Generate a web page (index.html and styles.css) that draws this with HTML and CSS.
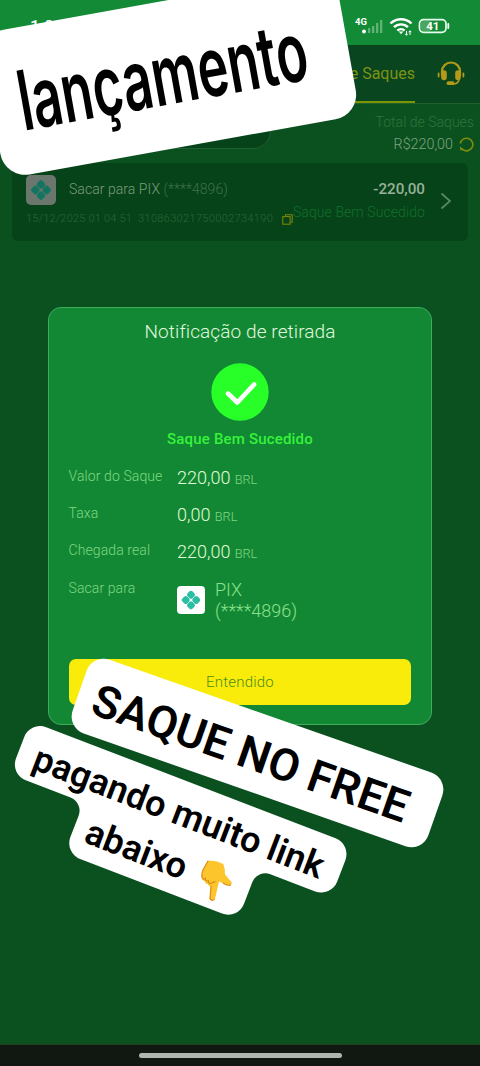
FILE: index.html
```html
<!DOCTYPE html>
<html lang="pt-BR">
<head>
<meta charset="utf-8">
<meta name="viewport" content="width=device-width, initial-scale=1">
<title>Notificação de retirada</title>
<link rel="stylesheet" href="styles.css">
</head>
<body>
<svg width="0" height="0" class="defs" aria-hidden="true">
  <symbol id="pix" viewBox="0 0 28 28">
    <g transform="translate(14 14) rotate(45)">
      <rect x="-7.1" y="-7.1" width="6.8" height="6.8" rx="2"/>
      <rect x="0.3" y="-7.1" width="6.8" height="6.8" rx="2"/>
      <rect x="-7.1" y="0.3" width="6.8" height="6.8" rx="2"/>
      <rect x="0.3" y="0.3" width="6.8" height="6.8" rx="2"/>
    </g>
  </symbol>
</svg>
<div class="phone">
  <header class="status-bar">
    <span class="clock">1:06</span>
    <svg class="status-icons" width="100" height="24" viewBox="0 0 100 24">
      <text x="0" y="11" class="net">4G</text>
      <circle cx="9" cy="17.5" r="2" fill="#fff"/>
      <g fill="#5fb475"><rect x="13" y="14" width="2.3" height="5"/><rect x="17" y="12" width="2.3" height="7"/><rect x="21" y="9" width="2.3" height="10"/><rect x="25" y="6" width="2.3" height="13"/></g>
      <g fill="none" stroke="#fff" stroke-width="2.4"><path d="M35.5 9.5a15 15 0 0 1 21 0M39 13.2a10 10 0 0 1 14 0M42.4 16.6a5.2 5.2 0 0 1 7.2 0"/></g>
      <path d="M43.7 17.500l2.300 2.800 2.300-2.800z" fill="#fff"/>
      <path d="M51.500 17v4m-1.200-1.200l1.200 1.500 1.200-1.500M55 21v-4m-1.200 1.200l1.200-1.500 1.200 1.500" stroke="#fff" fill="none"/>
      <rect x="64.5" y="5.7" width="26.5" height="12.6" rx="4" fill="none" stroke="#e8fff0" stroke-width="1.7"/>
      <rect x="66" y="7" width="10" height="10" rx="2" fill="#4aa65d"/>
      <path d="M93.3 10v4" stroke="#fff" stroke-width="1.8" stroke-linecap="round"/>
      <text x="71.2" y="16.2" class="battery">41</text>
    </svg>
  </header>
  <nav class="tabs">
    <span class="tab">Registro de Saques</span>
    <svg width="28" height="28" viewBox="0 0 28 28" fill="none" stroke="#b39a19" stroke-linecap="round">
      <path d="M5 15v-3.500a9 9 0 0 1 18 0v3.500" stroke-width="2.200"/>
      <path d="M7 13v4.500M21 13v4.500" stroke-width="5.600"/>
      <path d="M1.600 13.500v3M26.400 13.500v3" stroke-width="1.800"/>
      <path d="M22 20c-1 3-3 4-6 4" stroke-width="1.600"/>
      <path d="M11.500 23.200h4" stroke-width="3.800"/>
    </svg>
  </nav>
  <section class="summary">
    <div class="filter"><svg width="8" height="6" viewBox="0 0 8 6"><path d="M1 1l3 3 3-3" fill="none" stroke="#498454"/></svg></div>
    <div class="total">
      <span class="total-label">Total de Saques</span>
      <span class="total-value">R$220,00
        <svg width="15" height="15" viewBox="0 0 15 15" fill="none" stroke="#7f8c0b" stroke-width="1.6"><path d="M1.300 6.500A6.300 6.300 0 1 1 3.800 12.600"/><path d="M.8 9.500l.6 4 3.800-.9z" fill="#7f8c0b" stroke="none"/></svg>
      </span>
    </div>
  </section>
  <section class="record">
    <div class="record-main">
      <div class="record-top">
        <svg class="pix-dim" width="30" height="30"><use href="#pix"/></svg>
        <span class="method">Sacar para PIX <em>(****4896)</em></span>
      </div>
      <div class="record-meta"><span class="date">15/12/2025 01 04 51</span><span class="order">310863021750002734190</span>
        <svg width="11" height="11" viewBox="0 0 11 11" fill="none" stroke="#7b8408" stroke-width="1.1"><path d="M3.5 2.5V.8h6.7v7.5H8.5"/><rect x=".8" y="2.6" width="7.3" height="7.6"/></svg>
      </div>
    </div>
    <div class="record-side"><strong>-220,00</strong><span>Saque Bem Sucedido</span></div>
    <svg class="chevron" width="12" height="18" viewBox="0 0 12 18"><path d="M1.5 1.5L10 9l-8.500 7.500" fill="none" stroke="#5b8961" stroke-width="1.7"/></svg>
  </section>
  <footer class="home-bar"><span></span></footer>

  <section class="modal">
    <h1>Notificação de retirada</h1>
    <svg class="check" width="58" height="58" viewBox="0 0 58 58"><circle cx="29" cy="29" r="28.7" fill="#28ff28"/><path d="M17 30.500l9.300 9 16.800-18" fill="none" stroke="#fff" stroke-width="4.600" stroke-linecap="round" stroke-linejoin="round"/></svg>
    <p class="result">Saque Bem Sucedido</p>
    <dl>
      <dt>Valor do Saque</dt><dd>220,00 <small>BRL</small></dd>
      <dt>Taxa</dt><dd>0,00 <small>BRL</small></dd>
      <dt>Chegada real</dt><dd>220,00 <small>BRL</small></dd>
      <dt>Sacar para</dt>
      <dd class="target"><svg width="28" height="28"><use href="#pix"/></svg><span>PIX<br>(****4896)</span></dd>
    </dl>
    <button>Entendido</button>
  </section>

  <svg class="sticker sticker-launch" width="361" height="147">
    <rect width="361" height="147" rx="25" fill="#fff"/>
    <text transform="translate(27 103) scale(.622 1)">lançamento</text>
  </svg>
  <svg class="sticker sticker-free" width="377" height="78">
    <rect width="377" height="78" rx="18" fill="#fff"/>
    <text x="16" y="57">SAQUE NO FREE</text>
  </svg>
  <svg class="sticker sticker-link" width="344" height="111">
    <path d="M17 0H327a17 17 0 0 1 17 17V40a17 17 0 0 1-17 17H279a14 14 0 0 0-14 14V94a17 17 0 0 1-17 17H96a17 17 0 0 1-17-17V71a14 14 0 0 0-14-14H17a17 17 0 0 1-17-17V17a17 17 0 0 1 17-17z" fill="#fff"/>
    <text x="17" y="44">pagando muito link</text>
    <text x="92" y="94">abaixo</text>
  </svg>
  <svg class="hand" width="33.300" height="45" viewBox="120 55 100 135">
    <path d="M144 64Q165 60 190 73Q196 88 195 104Q206 119 214 126Q218 133 210 138Q194 137 183 128L177 126L165 178Q158 187 149 178L152 139Q146 142 144 133Q135 134 135 125Q125 123 125 112Q123 101 132 85Z" fill="#fcc52b"/>
    <path d="M144 64L132 85Q124 98 126 113q5 9 10 3q1 11 9 7q0 12 10 7l10 -4M153 139l-3 39q6 7 13 2M190 131q12 8 22 5" fill="none" stroke="#dc8b19" stroke-width="3.500" stroke-linecap="round"/>
  </svg>
</div>
</body>
</html>
```
FILE: styles.css
```css
* { box-sizing: border-box; }
body { margin: 0; font-family: Roboto, "Liberation Sans", sans-serif; }
svg { flex: none; }
.defs { position: absolute; }
.phone { position: relative; width: 480px; height: 1066px; overflow: hidden; background: #0b5120; display: flex; flex-direction: column; }

.status-bar { height: 45px; flex: none; background: #138a36; display: flex; justify-content: space-between; padding: 14px 25px 0 30px; color: #fff; }
.clock { font-size: 17px; font-weight: 500; line-height: 24px; }
.net { font-size: 9.500px; font-weight: 700; fill: #fff; }
.battery { font-size: 11.500px; font-weight: 700; fill: #fff; }

.tabs { height: 59px; flex: none; background: #09451f; border-bottom: 1px solid #23602f; display: flex; justify-content: flex-end; align-items: center; gap: 22px; padding-right: 15px; }
.tab { height: 58px; border-bottom: 2px solid #7d9500; color: #7d9413; font-size: 16px; line-height: 58px; }

.summary { height: 59px; flex: none; display: flex; justify-content: space-between; padding: 8px 6px 0 12px; }
.filter { width: 259px; height: 37px; border: 1px solid #21602f; border-radius: 18px; background: #06431a; display: flex; align-items: center; justify-content: flex-end; padding-right: 19px; }
.total { display: flex; flex-direction: column; align-items: flex-end; }
.total-label { font-size: 14px; line-height: 20px; color: #2f713e; font-weight: 300; letter-spacing: .02px; }
.total-value { font-size: 14.300px; line-height: 25px; color: #7da37e; display: flex; align-items: center; gap: 6px; font-weight: 300; }

.record { height: 78px; flex: none; margin: 0 12px; background: #064319; border-radius: 6px; display: flex; padding: 12px 14px 0; }
.record-main { flex: 1; min-width: 0; }
.record-top { display: flex; align-items: center; gap: 13px; height: 30px; }
.pix-dim { background: #6b776c; border-radius: 5px; fill: #147461; }
.method { color: #7c9b7c; font-size: 14px; line-height: 18px; margin-top: -2px; white-space: nowrap; font-weight: 300; letter-spacing: .05px; }
.method em { font-style: normal; color: #3f7149; }
.record-meta { display: flex; align-items: center; font-size: 11px; line-height: 14px; margin-top: 7px; color: #2c6638; font-weight: 300; white-space: nowrap; gap: 6px; }
.date { width: 107px; letter-spacing: .2px; }
.order { width: 135px; letter-spacing: .33px; }
.record-meta svg { margin-left: 3px; }
.record-side { width: 140px; display: flex; flex: none; flex-direction: column; align-items: flex-end; white-space: nowrap; margin-right: 15px; }
.record-side strong { font-size: 15.200px; line-height: 28px; color: #99b19a; font-weight: 500; }
.record-side span { font-size: 14px; line-height: 18px; color: #10702a; font-weight: 300; letter-spacing: .08px; }
.chevron { margin: 17px 2px 0 0; }
.home-bar { margin-top: auto; height: 22px; background: #111811; border-top: 1px solid #243d20; display: flex; justify-content: center; padding-top: 8px; }
.home-bar span { width: 203px; height: 5px; background: #b0b5ae; border-radius: 3px; }

.modal { position: absolute; left: 48px; top: 307px; width: 384px; height: 418px; border: 1.500px solid #40ac5b; border-radius: 13px; background: #138834; display: flex; flex-direction: column; align-items: center; padding: 11px 19.500px 0; }
.modal h1 { margin: 0; font-size: 19px; line-height: 26px; font-weight: 300; color: #e1f9df; letter-spacing: .1px; white-space: nowrap; }
.check { margin-top: 18px; }
.result { margin: 8px 0 0; font-size: 15px; line-height: 20px; font-weight: 500; color: #35f33a; letter-spacing: .18px; }
.modal dl { width: 100%; margin: 18px 0 0; display: grid; grid-template-columns: 108.500px 1fr; grid-template-rows: repeat(3, 37.200px) 67px; }
.modal dt { font-size: 14px; line-height: 18px; color: #7fd783; font-weight: 300; letter-spacing: .1px; }
.modal dd { margin: 0; font-size: 18px; line-height: 22px; color: #e0fcd4; font-weight: 300; }
.modal small { font-size: 12.700px; color: #7fd783; font-weight: 300; }
.modal .target { display: flex; align-items: center; align-self: start; gap: 10px; line-height: 21px; color: #8ae18b; }
.target svg { background: #fff; border-radius: 4px; fill: #2abfa3; }
.modal button { width: 342px; height: 46px; margin-top: 13px; border: 0; border-radius: 7px; background: #f9ec0b; color: #4f8e19; font: 300 15px/46px Roboto, "Liberation Sans", sans-serif; padding: 0; letter-spacing: .2px; }

.sticker { position: absolute; overflow: visible; font-weight: 600; fill: #000; text-rendering: geometricPrecision; }
.sticker-launch { left: -11px; top: 1px; transform: rotate(-10.200deg); font: 600 83px Inter, Roboto, sans-serif; }
.sticker-free { left: 69.300px; top: 713.800px; transform: rotate(19.300deg); font-size: 45px; }
.sticker-link { left: -1px; top: 779.200px; transform: rotate(21deg); font-size: 36px; }
.hand { position: absolute; left: 200px; top: 858.300px; }
```
